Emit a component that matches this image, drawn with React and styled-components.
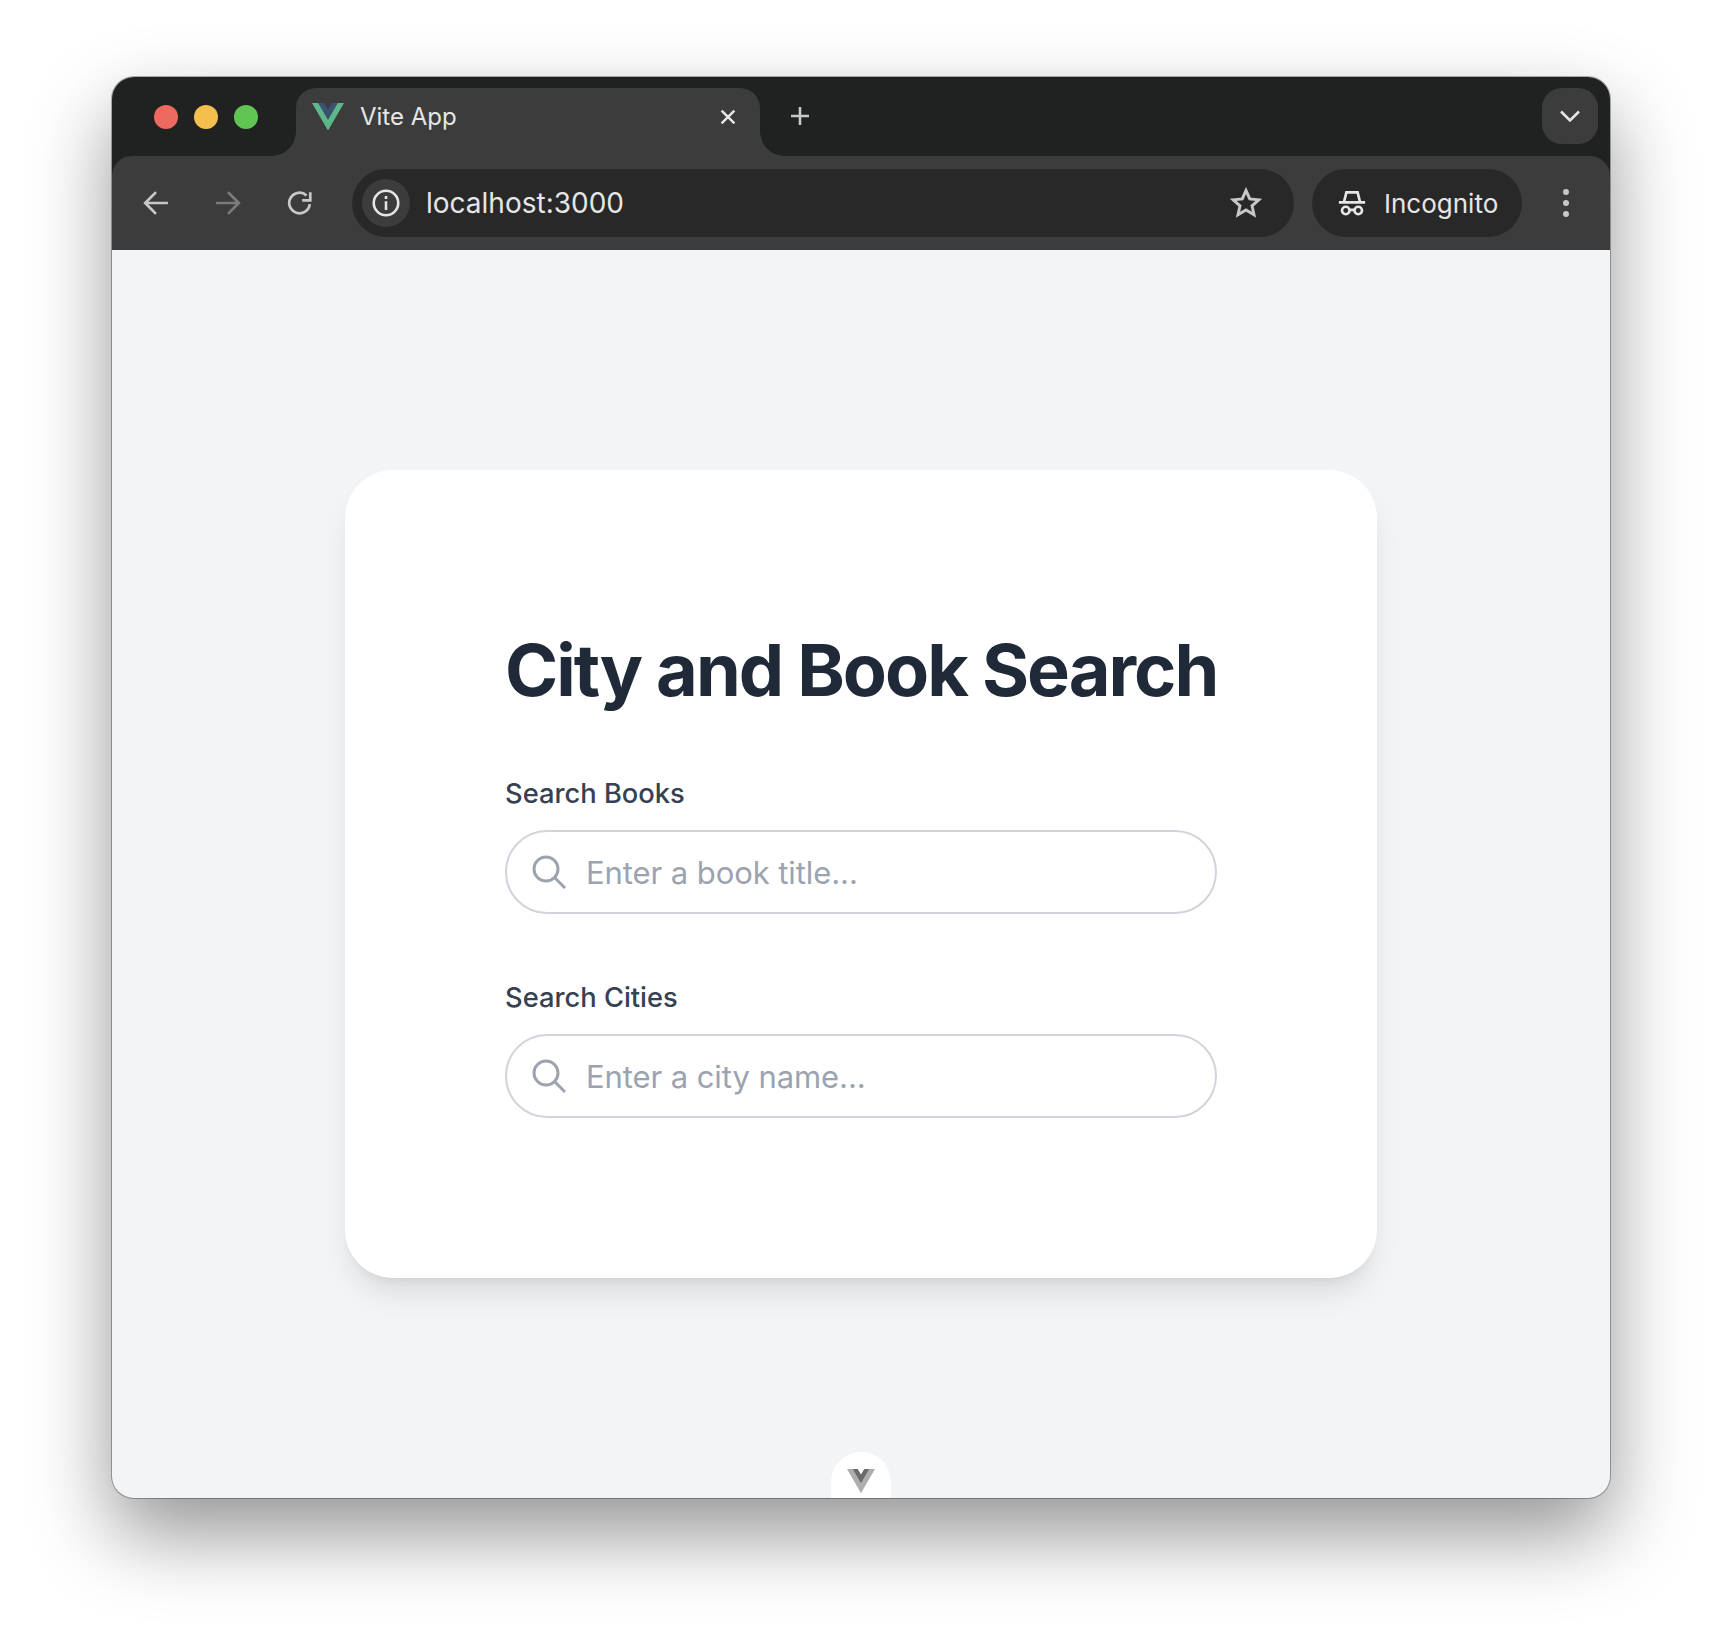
import React from "react";
import styled, { createGlobalStyle } from "styled-components";

const GlobalStyle = createGlobalStyle`
  html, body {
    margin: 0;
    background: #fff;
    font-family: Inter, "Liberation Sans", sans-serif;
  }
  * { box-sizing: border-box; }
`;

const VueLogo = ({ size, outer, inner }) => (
  <svg width={size} viewBox="0 0 256 221" style={{ display: "block" }}>
    <path fill={outer} d="M0 0l128 220.8L256 0h-51.2L128 132.48 50.56 0H0z" />
    <path fill={inner} d="M50.56 0L128 133.12 204.8 0h-47.36L128 51.2 97.92 0H50.56z" />
  </svg>
);

const ChromeIcon = ({ size = 24, width = 2.6, children }) => (
  <svg
    width={size}
    height={size}
    viewBox="0 0 24 24"
    fill="none"
    stroke="currentColor"
    strokeWidth={width}
    style={{ display: "block" }}
  >
    {children}
  </svg>
);

const SearchIcon = () => (
  <svg width="34" height="34" viewBox="0 0 34 34" fill="none" stroke="#9ca3af" strokeWidth="3">
    <circle cx="14" cy="14" r="12" />
    <path d="M22.8 22.8L33 33" />
  </svg>
);

const SearchField = ({ label, placeholder }) => (
  <Field>
    <Label>{label}</Label>
    <InputWrap>
      <IconSlot>
        <SearchIcon />
      </IconSlot>
      <Input placeholder={placeholder} />
    </InputWrap>
  </Field>
);

export default function App() {
  return (
    <>
      <GlobalStyle />
      <Page>
        <BrowserWindow>
          <ChromeBar>
            <TabStrip>
              <Lights>
                <Light color="#ec6a5e" />
                <Light color="#f4bf4f" />
                <Light color="#61c554" />
              </Lights>
              <Tab>
                <VueLogo size={32} outer="#5cb88a" inner="#3b5170" />
                <TabTitle>Vite App</TabTitle>
                <TabClose>
                  <ChromeIcon size={22} width={2.6}>
                    <path d="M5 5l14 14M19 5L5 19" />
                  </ChromeIcon>
                </TabClose>
              </Tab>
              <NewTab>
                <ChromeIcon size={24} width={2.6}>
                  <path d="M12 3v18M3 12h18" />
                </ChromeIcon>
              </NewTab>
              <TabSearch>
                <ChromeIcon size={24} width={2.6}>
                  <path d="M3 7.5l9 9 9-9" />
                </ChromeIcon>
              </TabSearch>
            </TabStrip>

            <Toolbar>
              <NavButton>
                <ChromeIcon size={26} width={2.5}>
                  <path d="M23 12H2.5M12 2L2 12l10 10" />
                </ChromeIcon>
              </NavButton>
              <NavButton dim>
                <ChromeIcon size={26} width={2.5}>
                  <path d="M1 12h20.5M12 2l10 10-10 10" />
                </ChromeIcon>
              </NavButton>
              <NavButton>
                <ChromeIcon size={26} width={2.5}>
                  <path d="M21 13a9.5 9.5 0 1 1-3-8" />
                  <path d="M21.5 2v7.5H14" />
                </ChromeIcon>
              </NavButton>
              <AddressBar>
                <InfoBadge>
                  <ChromeIcon size={28} width={2.2}>
                    <circle cx="12" cy="12" r="10.5" />
                    <path d="M12 10.5V18" />
                    <path d="M12 6v2.6" />
                  </ChromeIcon>
                </InfoBadge>
                <Url>localhost:3000</Url>
                <StarSlot>
                  <ChromeIcon size={32} width={2.2}>
                    <path d="M12 2.6l2.8 6.3 6.8.7-5.1 4.5 1.5 6.7-6-3.5-6 3.5 1.5-6.7-5.1-4.5 6.8-.7z" />
                  </ChromeIcon>
                </StarSlot>
              </AddressBar>
              <IncognitoPill>
                <ChromeIcon size={30} width={2.1}>
                  <path d="M1.5 11.5h21M5.5 11.5L7.5 3.5h9l2 8" />
                  <circle cx="7" cy="18" r="3" />
                  <circle cx="17" cy="18" r="3" />
                  <path d="M10 17.5h4" />
                </ChromeIcon>
                <IncognitoText>Incognito</IncognitoText>
              </IncognitoPill>
              <MenuDots>
                <Dot />
                <Dot />
                <Dot />
              </MenuDots>
            </Toolbar>
          </ChromeBar>

          <Content>
            <Card>
              <Title>City and Book Search</Title>
              <SearchField label="Search Books" placeholder="Enter a book title..." />
              <SearchField label="Search Cities" placeholder="Enter a city name..." />
            </Card>
            <DevtoolsTab>
              <VueLogo size={28} outer="#aeaeae" inner="#6b6b6b" />
            </DevtoolsTab>
          </Content>
        </BrowserWindow>
      </Page>
    </>
  );
}

const Page = styled.div`
  width: 1722px;
  height: 1646px;
  padding: 77px 112px 0;
  overflow: hidden;
`;

const BrowserWindow = styled.div`
  height: 1421px;
  display: flex;
  flex-direction: column;
  border-radius: 22px;
  background: #f3f4f6;
  box-shadow: 0 0 0 1px rgba(0, 0, 0, 0.3), 0 36px 80px rgba(0, 0, 0, 0.42);
  overflow: hidden;
`;

const ChromeBar = styled.div`
  flex-shrink: 0;
  background: #202221;
`;

const TabStrip = styled.div`
  height: 79px;
  display: flex;
  align-items: flex-start;
`;

const Lights = styled.div`
  display: flex;
  gap: 16px;
  padding: 28px 0 0 42px;
  margin-right: 38px;
`;

const Light = styled.span`
  width: 24px;
  height: 24px;
  border-radius: 50%;
  background: ${(p) => p.color};
`;

const Tab = styled.div`
  position: relative;
  width: 464px;
  height: 68px;
  margin-top: 11px;
  padding: 0 24px 11px 16px;
  display: flex;
  align-items: center;
  background: #3c3c3c;
  border-radius: 20px 20px 0 0;
  color: #e6e6e6;

  &::before,
  &::after {
    content: "";
    position: absolute;
    bottom: 0;
    width: 24px;
    height: 24px;
  }
  &::before {
    left: -24px;
    background: radial-gradient(circle at 0 0, transparent 23.5px, #3c3c3c 24px);
  }
  &::after {
    right: -24px;
    background: radial-gradient(circle at 100% 0, transparent 23.5px, #3c3c3c 24px);
  }
`;

const TabTitle = styled.span`
  margin-left: 16px;
  font-size: 24px;
  line-height: 32px;
`;

const TabClose = styled.span`
  margin-left: auto;
  margin-right: -3px;
  color: #e6e6e6;
`;

const NewTab = styled.span`
  margin: 27px 0 0 28px;
  color: #c8c8c8;
`;

const TabSearch = styled.span`
  width: 56px;
  height: 56px;
  margin: 11px 12px 0 auto;
  display: flex;
  align-items: center;
  justify-content: center;
  background: #3c3c3c;
  border-radius: 20px;
  color: #e6e6e6;
`;

const Toolbar = styled.div`
  height: 94px;
  display: flex;
  align-items: center;
  padding-left: 8px;
  background: #3c3c3c;
  border-radius: 20px 20px 0 0;
`;

const NavButton = styled.span`
  width: 72px;
  display: flex;
  justify-content: center;
  color: ${(p) => (p.dim ? "#7b7b7b" : "#c8c8c8")};
`;

const AddressBar = styled.div`
  width: 942px;
  height: 68px;
  margin-left: 16px;
  padding: 0 32px 0 10px;
  display: flex;
  align-items: center;
  background: #282828;
  border-radius: 34px;
`;

const InfoBadge = styled.span`
  width: 48px;
  height: 48px;
  display: flex;
  align-items: center;
  justify-content: center;
  background: #3c3c3c;
  border-radius: 50%;
  color: #e6e6e6;
`;

const Url = styled.span`
  margin-left: 16px;
  font-size: 28px;
  color: #e6e6e6;
`;

const StarSlot = styled.span`
  margin-left: auto;
  color: #c8c8c8;
`;

const IncognitoPill = styled.div`
  width: 210px;
  height: 68px;
  margin-left: 18px;
  padding-left: 25px;
  display: flex;
  align-items: center;
  gap: 17px;
  background: #282828;
  border-radius: 34px;
  color: #e6e6e6;
`;

const IncognitoText = styled.span`
  font-size: 26px;
`;

const MenuDots = styled.div`
  flex: 1;
  display: flex;
  flex-direction: column;
  align-items: center;
  gap: 5px;
`;

const Dot = styled.span`
  width: 6px;
  height: 6px;
  border-radius: 50%;
  background: #c8c8c8;
`;

const Content = styled.div`
  position: relative;
  flex: 1;
  display: flex;
  align-items: center;
  justify-content: center;
`;

const Card = styled.div`
  width: 1032px;
  padding: 160px;
  display: flex;
  flex-direction: column;
  gap: 64px;
  background: #fff;
  border-radius: 48px;
  box-shadow: 0 20px 30px -6px rgba(0, 0, 0, 0.1), 0 8px 12px -8px rgba(0, 0, 0, 0.1);
`;

const Title = styled.h1`
  margin: 0;
  font-size: 72px;
  line-height: 80px;
  font-weight: 700;
  letter-spacing: -2px;
  white-space: nowrap;
  color: #1f2937;
`;

const Field = styled.div`
  display: flex;
  flex-direction: column;
  gap: 16px;
`;

const Label = styled.label`
  font-size: 27.3px;
  line-height: 40px;
  font-weight: 500;
  color: #374151;
`;

const InputWrap = styled.div`
  position: relative;
`;

const IconSlot = styled.span`
  position: absolute;
  left: 27px;
  top: 25px;
  line-height: 0;
`;

const Input = styled.input`
  display: block;
  width: 100%;
  height: 84px;
  padding: 0 40px 0 79px;
  font-family: inherit;
  font-size: 31px;
  letter-spacing: -0.08px;
  color: #1f2937;
  background: #fff;
  border: 2px solid #d1d5db;
  border-radius: 42px;
  outline: none;

  &::placeholder {
    color: #9ca3af;
    opacity: 1;
  }
`;

const DevtoolsTab = styled.div`
  position: absolute;
  left: 50%;
  bottom: 0;
  width: 60px;
  height: 46px;
  margin-left: -30px;
  padding: 17px 0 0 16px;
  background: #fff;
  border-radius: 30px 30px 0 0;
`;
